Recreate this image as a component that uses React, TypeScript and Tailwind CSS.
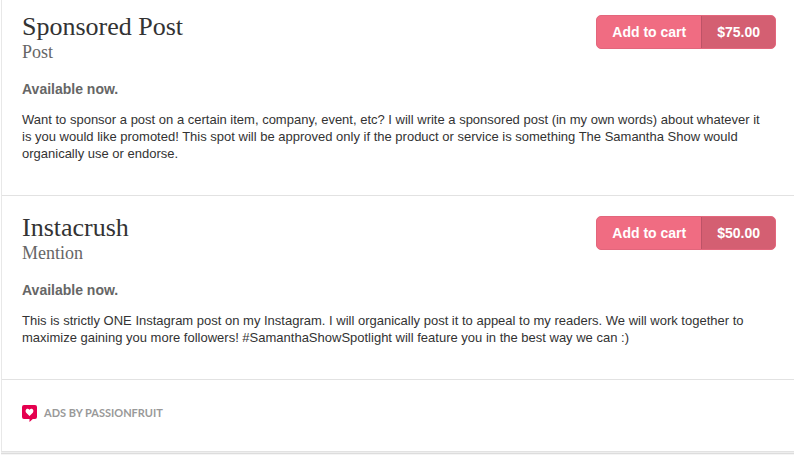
interface Spot {
    title: string;
    kind: string;
    price: string;
    description: string;
}

const spots: Spot[] = [
    {
        title: 'Sponsored Post',
        kind: 'Post',
        price: '$75.00',
        description:
            'Want to sponsor a post on a certain item, company, event, etc? I will write a sponsored post (in my own words) about whatever it is you would like promoted! This spot will be approved only if the product or service is something The Samantha Show would organically use or endorse.',
    },
    {
        title: 'Instacrush',
        kind: 'Mention',
        price: '$50.00',
        description:
            'This is strictly ONE Instagram post on my Instagram. I will organically post it to appeal to my readers. We will work together to maximize gaining you more followers! #SamanthaShowSpotlight will feature you in the best way we can :)',
    },
];

function CartButton({ price, title }: { price: string; title: string }) {
    return (
        <button
            type="button"
            title={`Add ${title} to cart`}
            className="flex h-[34px] shrink-0 cursor-pointer overflow-hidden rounded-[5px] border border-[#e3667c] bg-[#f06c82] text-sm leading-8 font-bold text-white hover:brightness-95"
        >
            <span className="px-[15px]">Add to cart</span>
            <span className="border-l border-[#bd5367] bg-[#d45f72] px-[15px]">{price}</span>
        </button>
    );
}

function SpotItem({ spot }: { spot: Spot }) {
    return (
        <li className="border-b border-[#e2e2e2] pt-5 pr-[18px] pb-[33px] pl-5 first:pt-[15px]">
            <div className="flex items-start justify-between">
                <div className="font-['Liberation_Serif',serif]">
                    <h2 className="text-[26px] leading-6 text-[#333]">{spot.title}</h2>
                    <h3 className="text-lg leading-[26px] text-[#666]">{spot.kind}</h3>
                </div>
                <CartButton price={spot.price} title={spot.title} />
            </div>
            <p className="mt-4 text-sm leading-4 font-bold text-[#666]">Available now.</p>
            <p className="mt-3.5 pr-2 text-[13px] leading-[17px] text-[#333]">{spot.description}</p>
        </li>
    );
}

function HeartBubble() {
    return (
        <svg width="16" height="18" viewBox="0 0 16 18" aria-hidden="true">
            <path fill="#e5004f" d="M2 0h11a2 2 0 0 1 2 2v10a2 2 0 0 1-2 2h-2.200L7.500 17v-3H2a2 2 0 0 1-2-2V2a2 2 0 0 1 2-2z" />
            <path fill="#fff" d="M7.500 11 4.200 7.700C2.300 5.300 5.300 2.300 7.500 4.800c2.200-2.500 5.200.5 3.300 2.900z" />
        </svg>
    );
}

export default function App() {
    return (
        <div className="bg-white pb-1 pl-px font-['Liberation_Sans',Arial,sans-serif]">
            <main className="border-b border-l border-b-[#e2e2e2] border-l-[#e8e8e8] bg-white shadow-[0_1px_0_#eee,0_2px_0_#ddd,0_3px_0_#f5f5f5]">
                <ul>
                    {spots.map((spot) => (
                        <SpotItem key={spot.title} spot={spot} />
                    ))}
                </ul>
                <footer className="px-5 pt-[25px] pb-7">
                    <a href="#passionfruit" className="flex w-fit gap-1.5 text-[#999]">
                        <HeartBubble />
                        <span className="font-['Lato',sans-serif] text-[11px] leading-4 font-bold uppercase">Ads by Passionfruit</span>
                    </a>
                </footer>
            </main>
        </div>
    );
}
